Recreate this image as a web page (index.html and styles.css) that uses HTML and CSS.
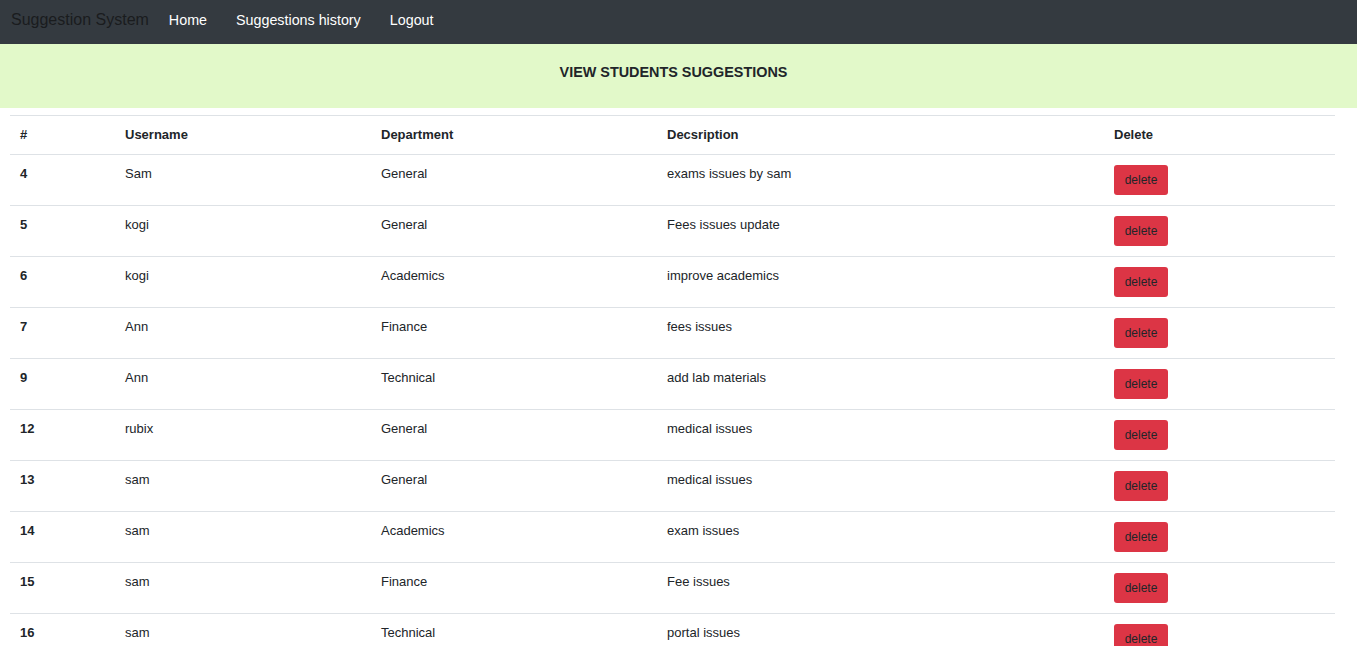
FILE: index.html
```html
<!DOCTYPE html>
<html lang="en">
<head>
<meta charset="utf-8">
<title>Suggestion System</title>
<link rel="stylesheet" href="styles.css">
</head>
<body>
<nav class="navbar">
  <a class="brand" href="#">Suggestion System</a>
  <a class="nav-link" href="#">Home</a>
  <a class="nav-link" href="#">Suggestions history</a>
  <a class="nav-link" href="#">Logout</a>
</nav>
<header class="banner">
  <h1>VIEW STUDENTS SUGGESTIONS</h1>
</header>
<table class="table">
  <colgroup>
    <col class="c1"><col class="c2"><col class="c3"><col class="c4"><col class="c5">
  </colgroup>
  <thead>
    <tr><th>#</th><th>Username</th><th>Department</th><th>Decsription</th><th>Delete</th></tr>
  </thead>
  <tbody>
    <tr><th>4</th><td>Sam</td><td>General</td><td>exams issues by sam</td><td><button class="btn-del">delete</button></td></tr>
    <tr><th>5</th><td>kogi</td><td>General</td><td>Fees issues update</td><td><button class="btn-del">delete</button></td></tr>
    <tr><th>6</th><td>kogi</td><td>Academics</td><td>improve academics</td><td><button class="btn-del">delete</button></td></tr>
    <tr><th>7</th><td>Ann</td><td>Finance</td><td>fees issues</td><td><button class="btn-del">delete</button></td></tr>
    <tr><th>9</th><td>Ann</td><td>Technical</td><td>add lab materials</td><td><button class="btn-del">delete</button></td></tr>
    <tr><th>12</th><td>rubix</td><td>General</td><td>medical issues</td><td><button class="btn-del">delete</button></td></tr>
    <tr><th>13</th><td>sam</td><td>General</td><td>medical issues</td><td><button class="btn-del">delete</button></td></tr>
    <tr><th>14</th><td>sam</td><td>Academics</td><td>exam issues</td><td><button class="btn-del">delete</button></td></tr>
    <tr><th>15</th><td>sam</td><td>Finance</td><td>Fee issues</td><td><button class="btn-del">delete</button></td></tr>
    <tr><th>16</th><td>sam</td><td>Technical</td><td>portal issues</td><td><button class="btn-del">delete</button></td></tr>
  </tbody>
</table>
</body>
</html>
```
FILE: styles.css
```css
html, body {
  margin: 0;
  padding: 0;
}
body {
  font-family: "Liberation Sans", Arial, sans-serif;
  color: #212529;
  background: #fff;
}
.navbar {
  display: flex;
  align-items: center;
  height: 44px;
  box-sizing: border-box;
  padding: 0 0 4px 11px;
  background: #343a40;
}
.brand {
  font-size: 16px;
  line-height: 20px;
  color: #1a1c1e;
  text-decoration: none;
  margin-right: 20px;
}
.nav-link {
  font-size: 14.3px;
  line-height: 20px;
  color: #fff;
  text-decoration: none;
  margin-right: 29px;
}
.banner {
  background: #e2f9c9;
  height: 64px;
  padding-right: 10px;
  display: flex;
  justify-content: center;
  align-items: flex-start;
}
.banner h1 {
  margin: 20px 0 0;
  font-size: 14.4px;
  line-height: 16px;
  font-weight: bold;
  color: #212529;
}
.table {
  margin: 7px 0 0 10px;
  width: 1325px;
  border-collapse: collapse;
  table-layout: fixed;
  font-size: 13px;
}
.c1 { width: 105px; }
.c2 { width: 256px; }
.c3 { width: 286px; }
.c4 { width: 447px; }
.c5 { width: 231px; }
.table th, .table td {
  border-top: 1px solid #dee2e6;
  text-align: left;
  vertical-align: top;
  line-height: 20px;
}
.table thead th {
  padding: 9px 10px;
  font-weight: bold;
}
.table tbody th, .table tbody td {
  padding: 9px 10px 10px;
}
.table tbody th {
  font-weight: bold;
}
.btn-del {
  display: block;
  margin-top: 1px;
  width: 54px;
  height: 30px;
  padding: 0;
  border: 0;
  border-radius: 3px;
  background: #dc3545;
  color: #212529;
  font-family: "Liberation Sans", Arial, sans-serif;
  font-size: 12px;
  cursor: pointer;
}
```
